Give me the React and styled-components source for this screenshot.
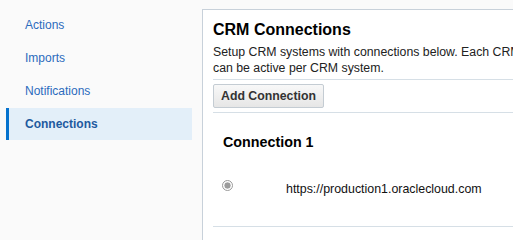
import React from "react";
import styled, { createGlobalStyle } from "styled-components";

const GlobalStyle = createGlobalStyle`
  html, body {
    margin: 0;
    padding: 0;
    background: #fafafa;
    overflow: hidden;
  }
  body {
    font-family: "Liberation Sans", Arial, sans-serif;
  }
`;

const Page = styled.div`
  display: flex;
  align-items: flex-start;
  width: 513px;
  height: 240px;
  overflow: hidden;
`;

const Sidebar = styled.nav`
  flex: 0 0 186px;
  margin-left: 6px;
  padding-top: 9px;
  display: flex;
  flex-direction: column;
  gap: 1px;
`;

const NavItem = styled.div`
  height: 32px;
  display: flex;
  align-items: center;
  padding-left: 16px;
  font-size: 12px;
  font-weight: ${(p) => (p.$active ? "bold" : "normal")};
  color: ${(p) => (p.$active ? "#1e5a9f" : "#2b6bbd")};
  background: ${(p) => (p.$active ? "#e3eff9" : "transparent")};
  border-left: 3px solid ${(p) => (p.$active ? "#0572ce" : "transparent")};
`;

const Panel = styled.section`
  flex: 0 0 600px;
  margin-left: 10px;
  margin-top: 9px;
  height: 260px;
  background: #fff;
  border: 1px solid #c8d1da;
  padding: 10px 0 0 10px;
`;

const Title = styled.h1`
  margin: 0;
  font-size: 16px;
  font-weight: bold;
  color: #000;
  line-height: 20px;
`;

const Description = styled.p`
  margin: 4px 0 3px;
  font-size: 12.3px;
  line-height: 16px;
  color: #222;
  white-space: nowrap;
`;

const Divider = styled.hr`
  border: 0;
  border-top: 1px solid #d6dfe6;
  margin: 0;
`;

const Toolbar = styled.div`
  padding: 4px 0;
  display: flex;
`;

const Button = styled.button`
  height: 24px;
  width: 111px;
  font-family: "Liberation Sans", Arial, sans-serif;
  font-size: 12.3px;
  font-weight: bold;
  color: #333;
  background: linear-gradient(#f8f8f8, #e6e6e6);
  border: 1px solid #c4ccd3;
  border-radius: 2px;
  padding: 0;
`;

const Connection = styled.div`
  padding: 20px 0 0 10px;
  height: 113px;
  box-sizing: border-box;
`;

const ConnTitle = styled.h2`
  margin: 0;
  font-size: 14.3px;
  font-weight: bold;
  color: #000;
  line-height: 18px;
`;

const Row = styled.label`
  display: flex;
  align-items: flex-start;
  margin-top: 31px;
  line-height: 14px;
`;

const Radio = styled.span`
  width: 11px;
  height: 11px;
  margin: -2px 0 0 -1px;
  border-radius: 50%;
  border: 1px solid #9a9a9a;
  box-sizing: border-box;
  background: radial-gradient(circle, #9c9c9c 0 2.8px, #eee 3.3px, #fff 4px);
  flex: 0 0 auto;
`;

const Url = styled.span`
  margin-left: 53px;
  font-size: 12.4px;
  color: #111;
`;

export default function App() {
  return (
    <Page>
      <GlobalStyle />
      <Sidebar>
        <NavItem>Actions</NavItem>
        <NavItem>Imports</NavItem>
        <NavItem>Notifications</NavItem>
        <NavItem $active>Connections</NavItem>
      </Sidebar>
      <Panel>
        <Title>CRM Connections</Title>
        <Description>
          Setup CRM systems with connections below. Each CRM system may have multiple connections, but only one connection
          <br />
          can be active per CRM system.
        </Description>
        <Divider />
        <Toolbar>
          <Button>Add Connection</Button>
        </Toolbar>
        <Divider />
        <Connection>
          <ConnTitle>Connection 1</ConnTitle>
          <Row>
            <Radio />
            <Url>https://production1.oraclecloud.com</Url>
          </Row>
        </Connection>
        <Divider />
      </Panel>
    </Page>
  );
}
